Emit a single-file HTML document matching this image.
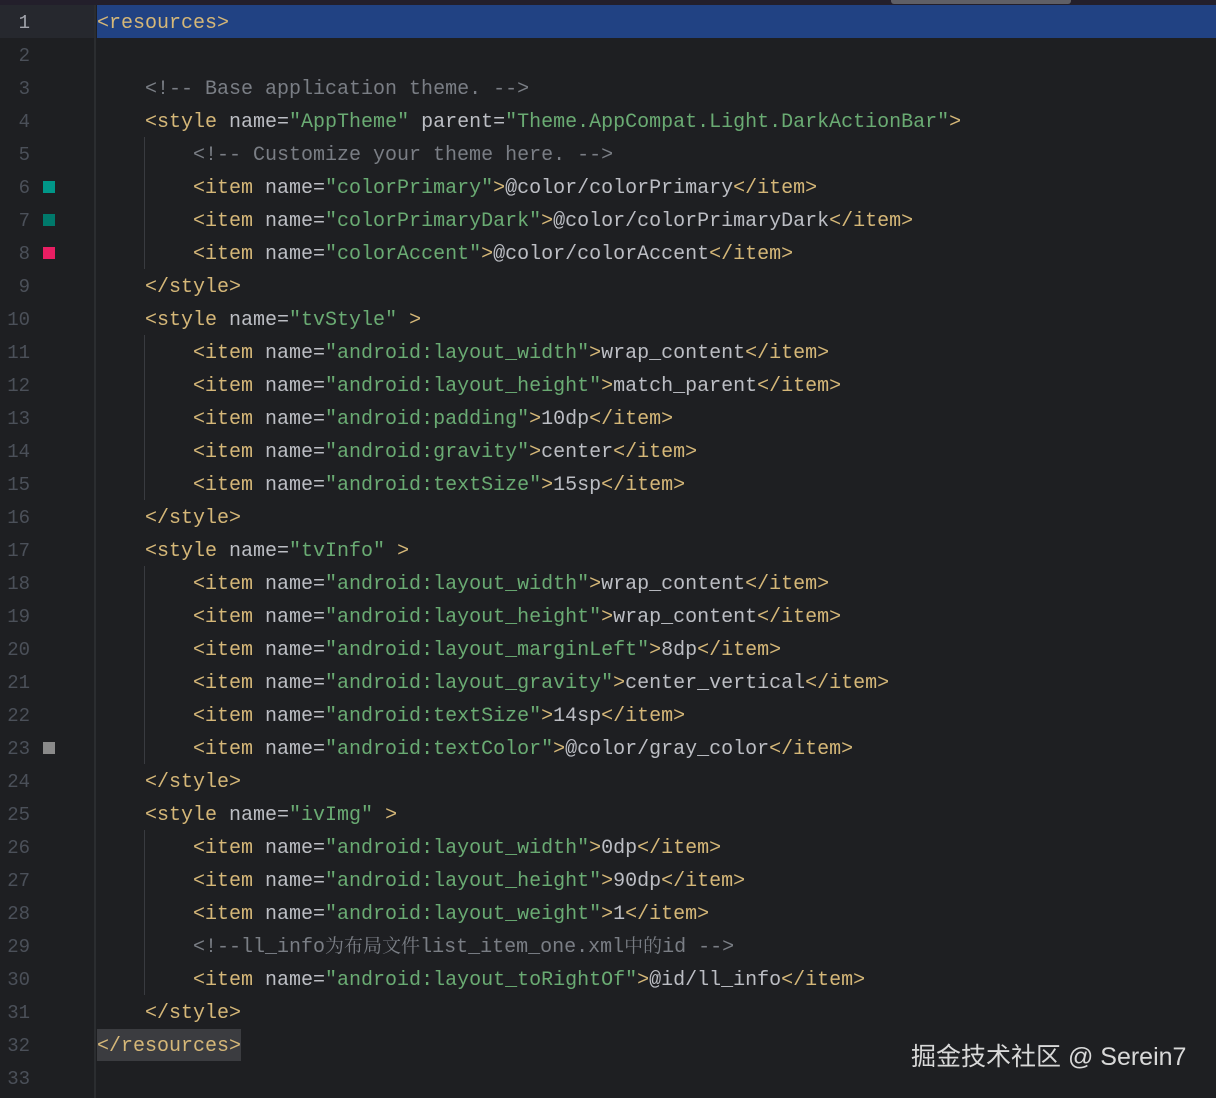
<!DOCTYPE html>
<html><head><meta charset="utf-8"><style>
html,body{margin:0;padding:0;}
body{width:1216px;height:1098px;background:#1e1f22;position:relative;overflow:hidden;font-family:"Liberation Mono","Noto Sans CJK SC",monospace;font-size:20px;}
.top{position:absolute;left:0;top:0;width:1216px;height:5px;background:#231f2b;}
.thumb{position:absolute;left:891px;top:0;width:180px;height:4px;background:#5f5f66;border-radius:0 0 3px 3px;}
.gut{position:absolute;left:0;top:5px;width:94px;height:1093px;background:#1e1f22;border-right:2px solid #2b2d30;}
.hl{position:absolute;left:97px;top:5px;width:1119px;height:33px;background:#214283;}
.hlg{position:absolute;left:0;top:5px;width:94px;height:33px;background:#26282e;}
.ln{position:absolute;left:0;width:30px;text-align:right;color:#4b5059;line-height:33px;height:33px;font-size:19px;padding-top:2px;}
.code{position:absolute;left:97px;line-height:33px;height:33px;white-space:pre;color:#bcbec4;padding-top:2px;}
.t{color:#d5b778}.v{color:#6aab73}.c{color:#7a7e85}
.cj{font-family:'Noto Serif CJK SC',serif;font-size:19px;line-height:1;}
.sw{position:absolute;left:43px;width:12px;height:12px;}
.guide{position:absolute;left:144px;width:1px;background:#393b40;}
.wm{position:absolute;left:911px;top:1037px;font-family:"Liberation Sans","Noto Sans CJK SC",sans-serif;font-size:25px;color:#d8d8d8;white-space:nowrap;}
</style></head><body>
<div class="top"></div><div class="thumb"></div>
<div class="gut"></div>
<div class="hlg"></div>
<div class="hl"></div>
<div style="position:absolute;left:97px;top:1029px;width:144px;height:32px;background:#3b3c40"></div>
<div class="guide" style="top:137px;height:132px"></div>
<div class="guide" style="top:335px;height:165px"></div>
<div class="guide" style="top:566px;height:198px"></div>
<div class="guide" style="top:830px;height:165px"></div>
<div class="sw" style="top:181px;background:#009688"></div>
<div class="sw" style="top:214px;background:#00796b"></div>
<div class="sw" style="top:247px;background:#e91e63"></div>
<div class="sw" style="top:742px;background:#8a8a8a"></div>
<div class="ln" style="top:5px;color:#a1a3ab">1</div>
<div class="ln" style="top:38px">2</div><div class="ln" style="top:71px">3</div><div class="ln" style="top:104px">4</div><div class="ln" style="top:137px">5</div><div class="ln" style="top:170px">6</div><div class="ln" style="top:203px">7</div><div class="ln" style="top:236px">8</div><div class="ln" style="top:269px">9</div><div class="ln" style="top:302px">10</div><div class="ln" style="top:335px">11</div><div class="ln" style="top:368px">12</div><div class="ln" style="top:401px">13</div><div class="ln" style="top:434px">14</div><div class="ln" style="top:467px">15</div><div class="ln" style="top:500px">16</div><div class="ln" style="top:533px">17</div><div class="ln" style="top:566px">18</div><div class="ln" style="top:599px">19</div><div class="ln" style="top:632px">20</div><div class="ln" style="top:665px">21</div><div class="ln" style="top:698px">22</div><div class="ln" style="top:731px">23</div><div class="ln" style="top:764px">24</div><div class="ln" style="top:797px">25</div><div class="ln" style="top:830px">26</div><div class="ln" style="top:863px">27</div><div class="ln" style="top:896px">28</div><div class="ln" style="top:929px">29</div><div class="ln" style="top:962px">30</div><div class="ln" style="top:995px">31</div><div class="ln" style="top:1028px">32</div><div class="ln" style="top:1061px">33</div>

<div class="code" style="top:5px"><span class="t">&lt;resources&gt;</span></div>
<div class="code" style="top:71px">    <span class="c">&lt;!-- Base application theme. --&gt;</span></div>
<div class="code" style="top:104px">    <span class="t">&lt;style</span> name=<span class="v">"AppTheme"</span> parent=<span class="v">"Theme.AppCompat.Light.DarkActionBar"</span><span class="t">&gt;</span></div>
<div class="code" style="top:137px">        <span class="c">&lt;!-- Customize your theme here. --&gt;</span></div>
<div class="code" style="top:170px">        <span class="t">&lt;item</span> name=<span class="v">"colorPrimary"</span><span class="t">&gt;</span>@color/colorPrimary<span class="t">&lt;/item&gt;</span></div>
<div class="code" style="top:203px">        <span class="t">&lt;item</span> name=<span class="v">"colorPrimaryDark"</span><span class="t">&gt;</span>@color/colorPrimaryDark<span class="t">&lt;/item&gt;</span></div>
<div class="code" style="top:236px">        <span class="t">&lt;item</span> name=<span class="v">"colorAccent"</span><span class="t">&gt;</span>@color/colorAccent<span class="t">&lt;/item&gt;</span></div>
<div class="code" style="top:269px">    <span class="t">&lt;/style&gt;</span></div>
<div class="code" style="top:302px">    <span class="t">&lt;style</span> name=<span class="v">"tvStyle"</span> <span class="t">&gt;</span></div>
<div class="code" style="top:335px">        <span class="t">&lt;item</span> name=<span class="v">"android:layout_width"</span><span class="t">&gt;</span>wrap_content<span class="t">&lt;/item&gt;</span></div>
<div class="code" style="top:368px">        <span class="t">&lt;item</span> name=<span class="v">"android:layout_height"</span><span class="t">&gt;</span>match_parent<span class="t">&lt;/item&gt;</span></div>
<div class="code" style="top:401px">        <span class="t">&lt;item</span> name=<span class="v">"android:padding"</span><span class="t">&gt;</span>10dp<span class="t">&lt;/item&gt;</span></div>
<div class="code" style="top:434px">        <span class="t">&lt;item</span> name=<span class="v">"android:gravity"</span><span class="t">&gt;</span>center<span class="t">&lt;/item&gt;</span></div>
<div class="code" style="top:467px">        <span class="t">&lt;item</span> name=<span class="v">"android:textSize"</span><span class="t">&gt;</span>15sp<span class="t">&lt;/item&gt;</span></div>
<div class="code" style="top:500px">    <span class="t">&lt;/style&gt;</span></div>
<div class="code" style="top:533px">    <span class="t">&lt;style</span> name=<span class="v">"tvInfo"</span> <span class="t">&gt;</span></div>
<div class="code" style="top:566px">        <span class="t">&lt;item</span> name=<span class="v">"android:layout_width"</span><span class="t">&gt;</span>wrap_content<span class="t">&lt;/item&gt;</span></div>
<div class="code" style="top:599px">        <span class="t">&lt;item</span> name=<span class="v">"android:layout_height"</span><span class="t">&gt;</span>wrap_content<span class="t">&lt;/item&gt;</span></div>
<div class="code" style="top:632px">        <span class="t">&lt;item</span> name=<span class="v">"android:layout_marginLeft"</span><span class="t">&gt;</span>8dp<span class="t">&lt;/item&gt;</span></div>
<div class="code" style="top:665px">        <span class="t">&lt;item</span> name=<span class="v">"android:layout_gravity"</span><span class="t">&gt;</span>center_vertical<span class="t">&lt;/item&gt;</span></div>
<div class="code" style="top:698px">        <span class="t">&lt;item</span> name=<span class="v">"android:textSize"</span><span class="t">&gt;</span>14sp<span class="t">&lt;/item&gt;</span></div>
<div class="code" style="top:731px">        <span class="t">&lt;item</span> name=<span class="v">"android:textColor"</span><span class="t">&gt;</span>@color/gray_color<span class="t">&lt;/item&gt;</span></div>
<div class="code" style="top:764px">    <span class="t">&lt;/style&gt;</span></div>
<div class="code" style="top:797px">    <span class="t">&lt;style</span> name=<span class="v">"ivImg"</span> <span class="t">&gt;</span></div>
<div class="code" style="top:830px">        <span class="t">&lt;item</span> name=<span class="v">"android:layout_width"</span><span class="t">&gt;</span>0dp<span class="t">&lt;/item&gt;</span></div>
<div class="code" style="top:863px">        <span class="t">&lt;item</span> name=<span class="v">"android:layout_height"</span><span class="t">&gt;</span>90dp<span class="t">&lt;/item&gt;</span></div>
<div class="code" style="top:896px">        <span class="t">&lt;item</span> name=<span class="v">"android:layout_weight"</span><span class="t">&gt;</span>1<span class="t">&lt;/item&gt;</span></div>
<div class="code" style="top:929px">        <span class="c">&lt;!--ll_info<span class="cj">为布局文件</span>list_item_one.xml<span class="cj">中的</span>id --&gt;</span></div>
<div class="code" style="top:962px">        <span class="t">&lt;item</span> name=<span class="v">"android:layout_toRightOf"</span><span class="t">&gt;</span>@id/ll_info<span class="t">&lt;/item&gt;</span></div>
<div class="code" style="top:995px">    <span class="t">&lt;/style&gt;</span></div>
<div class="code" style="top:1028px"><span class="t">&lt;/resources&gt;</span></div>
<div class="wm">掘金技术社区 @ Serein7</div>
</body></html>
